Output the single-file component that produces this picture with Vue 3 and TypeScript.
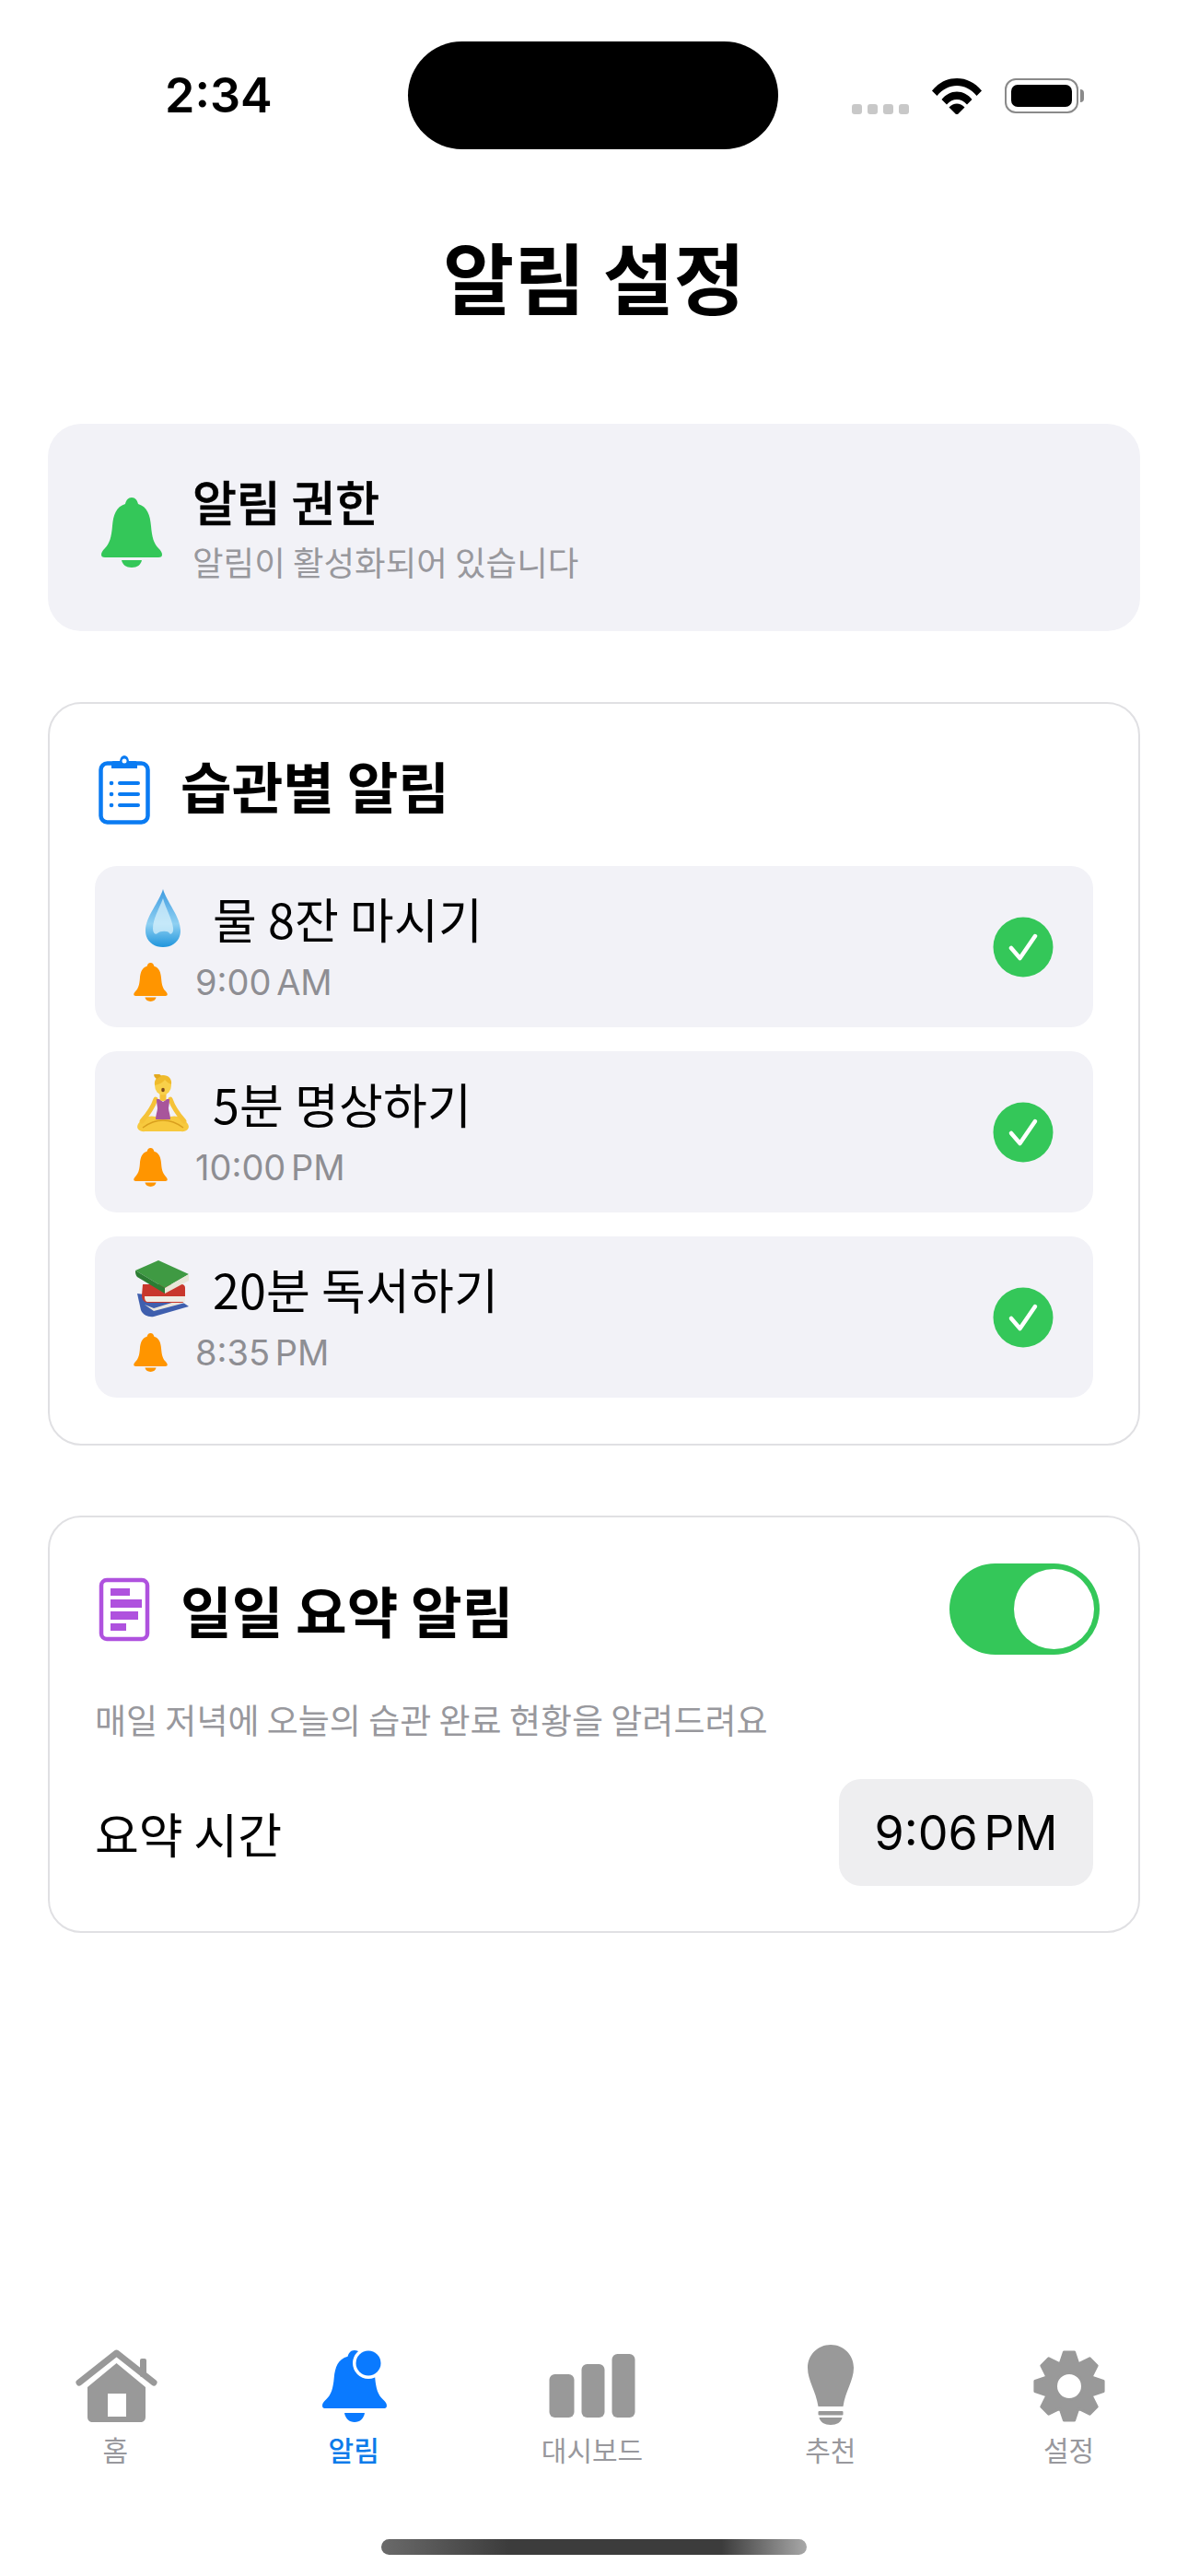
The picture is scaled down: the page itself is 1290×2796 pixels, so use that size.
<template>
  <div class="page">
    <!-- status bar -->
    <header class="status">
      <span class="clock">2:34</span>
      <div class="island"></div>
      <div class="indicators">
        <div class="signal"><i></i><i></i><i></i><i></i></div>
        <svg class="wifi" viewBox="0 0 56 40">
          <path d="M1 14.500C8.500 5.500 17.500 1 28 1s19.500 4.500 27 13.500l-5.500 5.500C43 12.500 36 9 28 9S13 12.500 6.500 20Z" fill="#000" />
          <path d="M11.500 24C16 18.500 21.500 15.500 28 15.500S40 18.500 44.500 24L39 29.500C35.500 25.500 32 24 28 24s-7.500 1.500-11 5.500Z" fill="#000" />
          <path d="M19.500 32.500C22 29.800 25 28.500 28 28.500s6 1.300 8.500 4L28 41Z" fill="#000" />
        </svg>
        <div class="battery"><div class="battery-fill"></div></div>
      </div>
    </header>

    <h1 class="title">알림 설정</h1>

    <main class="content">
      <!-- permission -->
      <section class="permission">
        <svg class="perm-bell" viewBox="0 0 66 76">
          <path :d="bellPath" fill="#34c759" />
          <path :d="clapperPath" fill="#34c759" />
        </svg>
        <div>
          <div class="perm-title">알림 권한</div>
          <div class="perm-sub">알림이 활성화되어 있습니다</div>
        </div>
      </section>

      <!-- per habit -->
      <section class="card">
        <div class="card-head">
          <svg class="head-icon list-icon" viewBox="0 0 56 76">
            <rect x="2.500" y="9.500" width="51" height="64" rx="7" fill="none" stroke="#0a7bf2" stroke-width="4.500" />
            <path d="M16 7h7c.5-4 2.500-6 5-6s4.500 2 5 6h7c1 0 2 1 2 2.500V15H14V9.500C14 8 15 7 16 7Z" fill="#0a7bf2" />
            <circle cx="28" cy="7" r="2.500" fill="#fff" />
            <g fill="#0a7bf2">
              <circle cx="14" cy="31" r="2.300" /><rect x="21" y="29" width="24" height="4" rx="2" />
              <circle cx="14" cy="43" r="2.300" /><rect x="21" y="41" width="24" height="4" rx="2" />
              <circle cx="14" cy="55" r="2.300" /><rect x="21" y="53" width="24" height="4" rx="2" />
            </g>
          </svg>
          <h2>습관별 알림</h2>
        </div>
        <div class="habits">
          <div v-for="h in habits" :key="h.name" class="habit">
            <div class="habit-main">
              <div class="habit-name">
                <svg v-if="h.emoji === 'drop'" class="emoji" viewBox="0 0 60 64">
                  <defs>
                    <linearGradient id="dropFill" x1="0" y1="0" x2="0" y2="1">
                      <stop offset="0" stop-color="#3d9be0" />
                      <stop offset="0.6" stop-color="#8fd0f2" />
                      <stop offset="1" stop-color="#1f95dc" />
                    </linearGradient>
                  </defs>
                  <path d="M30 0C26 14 11 30 11 45c0 11 8 18 19 18s19-7 19-18C49 30 34 14 30 0Z" fill="url(#dropFill)" />
                  <path d="M30 10c-4 11-11 22-11 33 0 5 3 7 5 5 3-3 12-3 13 0 1 2 5 0 4-6-1-9-8-21-11-32Z" fill="#d7f0fb" opacity="0.75" />
                </svg>
                <svg v-else-if="h.emoji === 'yoga'" class="emoji" viewBox="0 0 60 64">
                  <path d="M3 54c4-7 12-10 19-8h16c7-2 15 1 19 8 3 5-2 9-8 8H11c-6 1-11-3-8-8Z" fill="#f7c93e" />
                  <path d="M8 58c8-6 14-8 22-8s14 2 22 8" fill="none" stroke="#d99f1e" stroke-width="1.500" />
                  <path d="M22 27C19 36 14 43 7 51M38 27c3 9 8 16 15 24" fill="none" stroke="#f5c238" stroke-width="5" stroke-linecap="round" />
                  <path d="M23 27h3l4 3 4-3h3c0 5-1 8-1 10 0 3 2 7 2 12H22c0-5 2-9 2-12 0-2-1-5-1-10Z" fill="#a8559b" />
                  <rect x="26.500" y="18" width="7" height="11" rx="3" fill="#f5c238" />
                  <ellipse cx="30" cy="12" rx="9" ry="10.500" fill="#f8d04a" />
                  <path d="M21 12c-1-7 4-11 9-11 6 0 10 4 9 10-3-1-5-3-7-5-2 3-6 5-11 6Z" fill="#efbb2c" />
                  <path d="M23 5c-3-2-4-5-1-6 3 0 5 1 6 3Z" fill="#e3a91f" />
                  <ellipse cx="30" cy="17" rx="1.800" ry="2.200" fill="#7f4a1e" />
                </svg>
                <svg v-else class="emoji" viewBox="0 0 60 62">
                  <path d="M2 36l44 6 12 8-38 11c-6 1-12-2-14-7Z" fill="#3f5fae" />
                  <path d="M10 48l10 7 34-9-8-2-26 8Z" fill="#e8e6de" />
                  <path d="M8 26h42c3 0 4 2 4 4v12c0 2-2 4-4 4H14c-5 0-7-4-7-8Z" fill="#c8372c" />
                  <path d="M10 39h44v6H14c-3 0-4-2-4-6Z" fill="#efece4" />
                  <path d="M0 11 25 0l33 15-26 15Z" fill="#3f9a43" />
                  <path d="M0 11l32 19v6L2 18C0 16 0 13 0 11Z" fill="#2c7d33" />
                  <path d="M32 30l26-15v7L32 36Z" fill="#e7e6d8" />
                </svg>
                <span>{{ h.name }}</span>
              </div>
              <div class="habit-meta">
                <svg class="meta-bell" viewBox="0 0 66 76">
                  <path :d="bellPath" fill="#ff9500" />
                  <path :d="clapperPath" fill="#ff9500" />
                </svg>
                <span class="habit-time">{{ h.time }}</span>
              </div>
            </div>
            <svg class="check" viewBox="0 0 66 66">
              <circle cx="33" cy="33" r="32.500" fill="#34c759" />
              <path d="M20 34l9.500 11L46 21" fill="none" stroke="#fff" stroke-width="4.500" stroke-linecap="round" stroke-linejoin="round" />
            </svg>
          </div>
        </div>
      </section>

      <!-- daily summary -->
      <section class="card summary">
        <div class="summary-head">
          <div class="card-head">
            <svg class="head-icon summary-icon" viewBox="0 0 56 70">
              <rect x="3" y="3" width="50" height="64" rx="6" fill="none" stroke="#af52de" stroke-width="4.500" />
              <g fill="#af52de">
                <rect x="13" y="12" width="21" height="8" />
                <rect x="13" y="24" width="34" height="9" />
                <rect x="13" y="37" width="30" height="9" />
                <rect x="13" y="50" width="17" height="8" />
              </g>
            </svg>
            <h2>일일 요약 알림</h2>
          </div>
          <div class="toggle"><div class="knob"></div></div>
        </div>
        <p class="summary-desc">매일 저녁에 오늘의 습관 완료 현황을 알려드려요</p>
        <div class="summary-row">
          <span>요약 시간</span>
          <div class="time-pill">9:06 PM</div>
        </div>
      </section>
    </main>

    <!-- tab bar -->
    <nav class="tabs">
      <div v-for="t in tabs" :key="t.key" class="tab" :class="{ active: t.key === 'bell' }">
        <svg class="tab-icon" viewBox="0 0 90 90">
          <g v-if="t.key === 'home'" fill="#999">
            <path d="M46.500 20 78 46v32c0 4-2 6-6 6H21c-4 0-6-2-6-6V46Zm-9.500 33v25h20V53Z" fill-rule="evenodd" />
            <rect x="72" y="15" width="7" height="20" rx="2" />
            <path d="M6 41 46.500 9 87 41" fill="none" stroke="#999" stroke-width="7" stroke-linecap="round" stroke-linejoin="round" />
          </g>
          <g v-else-if="t.key === 'bell'" fill="#0a7aff">
            <path :d="bellPath" transform="translate(11 6) scale(1.06 0.97)" />
            <path d="M35 74h22c-1 6-5 10-11 10s-10-4-11-10Z" />
            <circle cx="61" cy="20" r="17" fill="#fff" />
            <circle cx="61" cy="20" r="13.500" />
          </g>
          <g v-else-if="t.key === 'chart'" fill="#999">
            <rect x="-1.500" y="32" width="27" height="47" rx="6" />
            <rect x="33.500" y="21" width="25" height="58" rx="6" />
            <rect x="66.500" y="10" width="25" height="69" rx="6" />
          </g>
          <g v-else-if="t.key === 'bulb'" fill="#999">
            <path d="M45 0c14 0 25 11 25 25 0 14-9 25-11.500 42h-27C29 50 20 39 20 25 20 11 31 0 45 0Z" />
            <rect x="31.500" y="72" width="27" height="4.500" rx="1" />
            <path d="M32.500 79h25c-1 5-6 8-12.500 8s-11.500-3-12.500-8Z" />
          </g>
          <g v-else fill="#999" stroke="#999" stroke-width="3" stroke-linejoin="round">
            <path fill-rule="evenodd" :d="gearPath" />
          </g>
        </svg>
        <span class="tab-label">{{ t.label }}</span>
      </div>
    </nav>

    <div class="home-bar"></div>
  </div>
</template>

<script setup lang="ts">
interface Habit {
  name: string
  time: string
  emoji: 'drop' | 'yoga' | 'books'
}

const habits: Habit[] = [
  { name: '물 8잔 마시기', time: '9:00 AM', emoji: 'drop' },
  { name: '5분 명상하기', time: '10:00 PM', emoji: 'yoga' },
  { name: '20분 독서하기', time: '8:35 PM', emoji: 'books' },
]

const tabs = [
  { key: 'home', label: '홈' },
  { key: 'bell', label: '알림' },
  { key: 'chart', label: '대시보드' },
  { key: 'bulb', label: '추천' },
  { key: 'gear', label: '설정' },
]

const bellPath =
  'M33 0c4 0 6 3 7 7 10 3 13 12 14 24 1 12 3 19 8 24 3 3 4 5 4 7 0 2-1 3-4 3H4c-3 0-4-1-4-3 0-2 1-4 4-7 5-5 7-12 8-24 1-12 4-21 14-24 1-4 3-7 7-7Z'
const clapperPath = 'M22 68h22c-1 5-5 8-11 8s-10-3-11-8Z'

// 8-tooth gear with a hole in the middle
function buildGear(): string {
  const cx = 45
  const cy = 45
  const pts: string[] = []
  for (let i = 0; i < 8; i++) {
    const a = (i * Math.PI) / 4 - Math.PI / 2
    const step = [
      [-0.36, 27],
      [-0.15, 37.5],
      [0.15, 37.5],
      [0.36, 27],
    ]
    for (const [da, r] of step) {
      const x = cx + r * Math.cos(a + da)
      const y = cy + r * Math.sin(a + da)
      pts.push(`${x.toFixed(1)} ${y.toFixed(1)}`)
    }
  }
  return `M${pts.join('L')}Z M59.500 45a14.500 14.500 0 1 0-29 0a14.500 14.500 0 1 0 29 0Z`
}

const gearPath = buildGear()
</script>

<style scoped>
.page {
  width: 1290px;
  height: 2796px;
  display: flex;
  flex-direction: column;
  background: #fff;
  color: #000;
  overflow: hidden;
  font-family: 'Noto Sans CJK KR', 'Noto Sans', sans-serif;
}

.status {
  display: flex;
  align-items: center;
  padding: 45px 119px 0 179px;
}
.clock {
  width: 264px;
  font: 600 52px Inter, sans-serif;
}
.island {
  width: 402px;
  height: 117px;
  background: #000;
  border-radius: 59px;
}
.indicators {
  flex: 1;
  display: flex;
  justify-content: flex-end;
  align-items: center;
  gap: 24px;
}
.signal {
  display: flex;
  gap: 6px;
  margin: 30px 0 0;
}
.signal i {
  width: 11px;
  height: 11px;
  border-radius: 3px;
  background: #c8c8c8;
}
.wifi {
  width: 56px;
  height: 40px;
}
.battery {
  position: relative;
  width: 80px;
  height: 38px;
  padding: 5px;
  border: 2px solid #8a8a8a;
  border-radius: 12px;
  box-sizing: border-box;
}
.battery::after {
  content: '';
  position: absolute;
  right: -8px;
  top: 10px;
  width: 4px;
  height: 14px;
  background: #8a8a8a;
  border-radius: 0 4px 4px 0;
}
.battery-fill {
  height: 100%;
  background: #000;
  border-radius: 7px;
}

.title {
  margin: 87px 0 111px;
  font-size: 84px;
  line-height: 100px;
  font-weight: 700;
  text-align: center;
}

.content {
  display: flex;
  flex-direction: column;
  gap: 77px;
  padding: 0 52px;
}

.permission {
  height: 225px;
  box-sizing: border-box;
  padding: 0 58px;
  display: flex;
  align-items: center;
  gap: 33px;
  background: #f2f2f7;
  border-radius: 36px;
}
.perm-bell {
  width: 66px;
  height: 76px;
  margin-top: 10px;
}
.perm-title {
  font-size: 52px;
  line-height: 64px;
  font-weight: 500;
  -webkit-text-stroke: 0.6px #000;
}
.perm-sub {
  margin-top: 10px;
  font-size: 36.500px;
  line-height: 48px;
  color: #98989d;
}

.card {
  border: 2px solid #e0e0e3;
  border-radius: 36px;
  padding: 50px 49px;
}
.card-head {
  display: flex;
  align-items: center;
  gap: 33px;
}
.card-head h2 {
  margin: 0;
  font-size: 60.500px;
  line-height: 76px;
  font-weight: 600;
}
.head-icon {
  width: 56px;
  height: 76px;
  margin-left: 4px;
}
.list-icon {
  transform: translateY(5px);
}
.summary-icon {
  height: 70px;
}

.habits {
  display: flex;
  flex-direction: column;
  gap: 26px;
  margin-top: 50px;
}
.habit {
  height: 175px;
  box-sizing: border-box;
  padding: 0 43px 0 42px;
  display: flex;
  align-items: center;
  justify-content: space-between;
  background: #f2f2f7;
  border-radius: 24px;
}
.habit-main {
  padding-bottom: 3px;
}
.habit-name {
  display: flex;
  align-items: center;
  gap: 24px;
  padding-left: 2px;
  font-size: 52px;
  line-height: 66px;
  letter-spacing: 0.2px;
}
.emoji {
  width: 60px;
  height: 64px;
}
.habit-meta {
  display: flex;
  align-items: center;
  gap: 30px;
  margin-top: 14px;
}
.meta-bell {
  width: 37px;
  height: 42px;
}
.habit-time {
  font: 400 38px/44px Inter, sans-serif;
  color: #8e8e93;
  word-spacing: -5px;
}
.check {
  width: 66px;
  height: 66px;
}

.summary {
  margin-top: -1px;
  padding-bottom: 49px;
}
.summary-head {
  display: flex;
  align-items: center;
  justify-content: space-between;
  margin-right: -7px;
}
.toggle {
  width: 163px;
  height: 99px;
  box-sizing: border-box;
  padding: 6px;
  display: flex;
  justify-content: flex-end;
  background: #34c759;
  border-radius: 50px;
}
.knob {
  width: 87px;
  height: 87px;
  background: #fff;
  border-radius: 50%;
}
.summary-desc {
  margin: 45px 0 0;
  font-size: 37px;
  line-height: 50px;
  color: #98989d;
}
.summary-row {
  display: flex;
  align-items: center;
  justify-content: space-between;
  margin-top: 40px;
  font-size: 52px;
}
.time-pill {
  width: 276px;
  height: 116px;
  display: flex;
  align-items: center;
  justify-content: center;
  background: #eeeef0;
  border-radius: 24px;
  font: 400 52px Inter, sans-serif;
  word-spacing: -8px;
}

.tabs {
  margin: auto 0 0 -4px;
  width: 1294px;
  display: grid;
  grid-template-columns: repeat(5, 1fr);
}
.tab {
  display: flex;
  flex-direction: column;
  align-items: center;
}
.tab-icon {
  width: 90px;
  height: 90px;
  overflow: visible;
}
.tab-label {
  margin-top: 3px;
  font-size: 30px;
  line-height: 40px;
  color: #98989d;
}
.tab.active .tab-label {
  color: #0b7bea;
  font-weight: 500;
}

.home-bar {
  align-self: center;
  width: 462px;
  height: 17px;
  margin: 78px 0 23px;
  border-radius: 9px;
  background: linear-gradient(90deg, #6a6a6a, #3c3c3c 30%, #3c3c3c 80%, #a8a8a8);
}
</style>

<style>
html, body { margin: 0; background: #fff; }
</style>
